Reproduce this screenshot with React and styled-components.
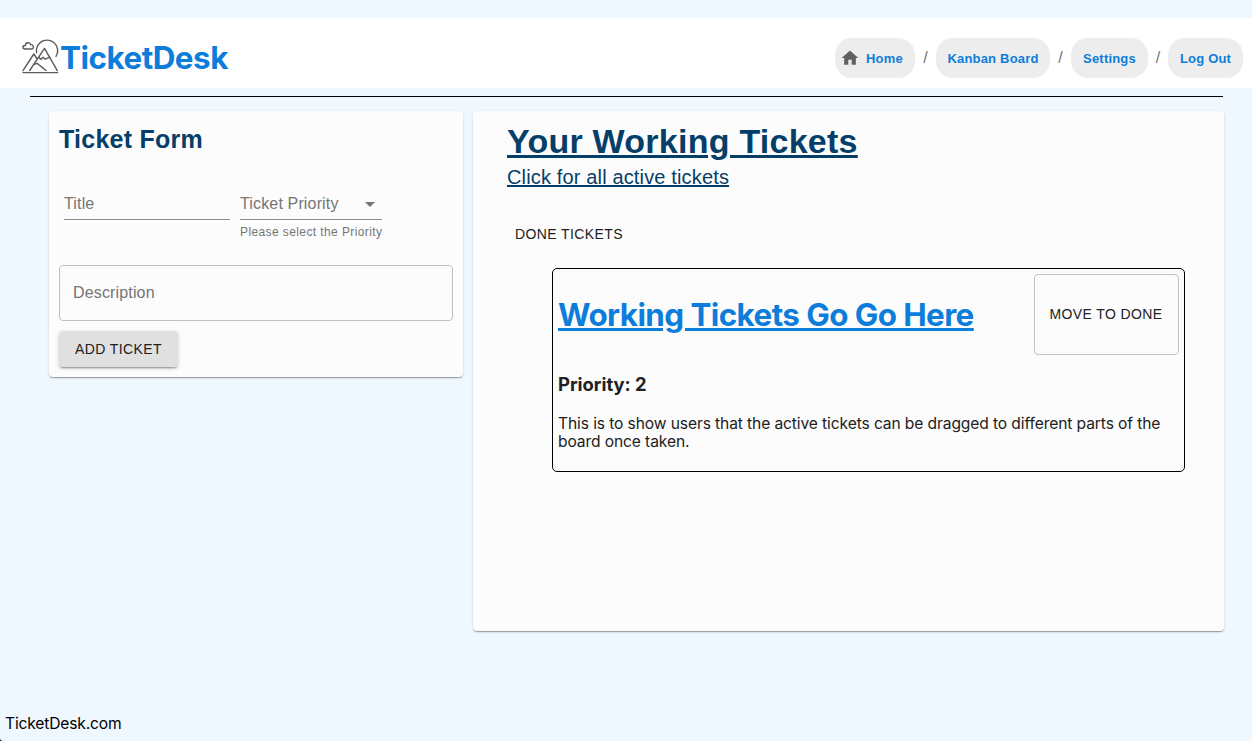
import React from "react";
import styled, { createGlobalStyle } from "styled-components";

const system = `Inter, "Liberation Sans", sans-serif`;
const helvetica = `"Liberation Sans", Arial, sans-serif`;

const GlobalStyle = createGlobalStyle`
  *, *::before, *::after { box-sizing: border-box; }
  body {
    margin: 0;
    background: #eff7ff;
    font-family: ${system};
    overflow: hidden;
  }
  h1, h2, h3, p { margin: 0; }
  button { font: inherit; }
`;

const Page = styled.div`
  display: flex;
  flex-direction: column;
  height: 100vh;
  padding-top: 18px;
`;

const Header = styled.header`
  display: flex;
  align-items: center;
  justify-content: space-between;
  height: 70px;
  padding: 0 9px 0 21px;
  background: #fff;
  flex: none;
`;

const Brand = styled.a`
  display: flex;
  align-items: center;
  height: 40px;
  color: #0d7ddb;
  text-decoration: none;
`;

const BrandName = styled.h1`
  font-size: 31.4px;
  line-height: 40px;
  font-weight: 700;
  letter-spacing: -0.5px;
  margin: 9px 0 0 -1px;
`;

const BrandLogo = styled.svg`
  width: 40px;
  height: 40px;
  margin-top: 7px;
`;

const Crumbs = styled.nav`
  display: flex;
  align-items: center;
  height: 40px;
  margin-top: 10px;
`;

const Crumb = styled.a`
  display: flex;
  align-items: center;
  justify-content: center;
  gap: 6px;
  width: ${(p) => p.$width}px;
  height: 40px;
  padding-top: 2px;
  padding-right: ${(p) => (p.$icon ? 7 : 0)}px;
  border-radius: 17px;
  background: #ededed;
  color: #0d7ddb;
  font: 700 13px/20px ${helvetica};
  letter-spacing: 0.2px;
  white-space: nowrap;
  svg { width: 20px; height: 20px; margin-top: -2px; fill: #616161; flex: none; }
`;

const Slash = styled.span`
  width: ${(p) => p.$width || 21}px;
  text-align: center;
  color: #757575;
  font: 16px/24px ${helvetica};
`;

const Divider = styled.hr`
  width: 1193px;
  height: 1px;
  margin: 8px 0 14px 30px;
  border: 0;
  background: #000;
  flex: none;
`;

const Main = styled.main`
  display: flex;
  align-items: flex-start;
  gap: 10px;
  padding: 0 28px 0 49px;
  flex: 1;
`;

const Card = styled.section`
  background: #fcfcfc;
  border-radius: 4px;
  box-shadow: 0 2px 1px -1px rgba(0, 0, 0, 0.2), 0 1px 1px 0 rgba(0, 0, 0, 0.14),
    0 1px 3px 0 rgba(0, 0, 0, 0.12);
`;

const FormCard = styled(Card)`
  width: 414px;
  height: 266px;
  padding: 10px;
`;

const FormTitle = styled.h2`
  color: #053e68;
  font: 700 25px/36px ${helvetica};
  letter-spacing: 0.25px;
`;

const FieldRow = styled.div`
  display: flex;
  gap: 10px;
  height: 92px;
  margin: 26px 5px 0;
`;

const Field = styled.div`
  width: ${(p) => p.$width}px;
  font-family: ${helvetica};
  color: #757575;
`;

const FieldLine = styled.div`
  display: flex;
  align-items: center;
  justify-content: space-between;
  height: 37px;
  padding-top: 5px;
  border-bottom: 1px solid #8c8c8c;
  font-size: 16px;
  letter-spacing: 0.15px;
  svg { width: 24px; height: 24px; fill: #757575; }
`;

const Helper = styled.p`
  padding-top: 2px;
  font-size: 12px;
  line-height: 20px;
  letter-spacing: 0.4px;
  white-space: nowrap;
`;

const Description = styled.div`
  display: flex;
  align-items: center;
  height: 56px;
  padding: 0 13px;
  margin-top: -10px;
  border: 1px solid #c1c1c1;
  border-radius: 4px;
  color: #757575;
  font: 16px/24px ${helvetica};
  letter-spacing: 0.15px;
`;

const Button = styled.button`
  display: flex;
  align-items: center;
  justify-content: center;
  padding: 0;
  border: 0;
  border-radius: 4px;
  background: transparent;
  color: #212121;
  font: 14px/24px ${helvetica};
  letter-spacing: 0.4px;
  text-transform: uppercase;
  white-space: nowrap;
`;

const AddButton = styled(Button)`
  width: 119px;
  height: 36px;
  margin-top: 10px;
  background: #e0e0e0;
  box-shadow: 0 3px 1px -2px rgba(0, 0, 0, 0.2), 0 2px 2px 0 rgba(0, 0, 0, 0.14),
    0 1px 5px 0 rgba(0, 0, 0, 0.12);
`;

const BoardCard = styled(Card)`
  flex: 1;
  height: 520px;
  padding: 9px 39px 0 34px;
`;

const BoardTitle = styled.h1`
  width: max-content;
  margin-bottom: 1px;
  color: #053e68;
  font: 700 34px/42px ${helvetica};
  letter-spacing: 0.25px;
  text-decoration: underline;
  text-decoration-thickness: 3px;
`;

const BoardLink = styled.a`
  display: block;
  width: max-content;
  color: #053e68;
  font: 20px/28px ${helvetica};
  letter-spacing: 0.15px;
  text-decoration: underline;
  text-decoration-thickness: 2px;
`;

const DoneButton = styled(Button)`
  width: 124px;
  height: 36px;
  margin-top: 25px;
`;

const Ticket = styled.article`
  height: 204px;
  margin: 16px 0 0 45px;
  padding: 5px;
  border: 1px solid #000;
  border-radius: 5px;
  color: #212121;
`;

const TicketHead = styled.div`
  display: flex;
  justify-content: space-between;
  align-items: center;
  height: 81px;
`;

const TicketTitle = styled.h1`
  color: #0d7ddb;
  font-size: 31.4px;
  line-height: 40px;
  font-weight: 700;
  letter-spacing: -0.58px;
  text-decoration: underline;
  text-decoration-thickness: 3px;
  white-space: nowrap;
`;

const MoveButton = styled(Button)`
  width: 145px;
  height: 81px;
  padding: 0 1px 2px 0;
  border: 1px solid #c1c1c1;
`;

const Priority = styled.h3`
  margin-top: 17px;
  font-size: 18.4px;
  line-height: 24px;
  font-weight: 700;
  letter-spacing: 0;
`;

const Body = styled.p`
  margin-top: 19px;
  font-size: 15.6px;
  line-height: 18px;
  letter-spacing: -0.11px;
  white-space: nowrap;
`;

const Footer = styled.footer`
  position: relative;
  height: 30px;
  padding: 1px 0 0 5px;
  font-size: 15.6px;
  line-height: 24px;
  color: #000;
  letter-spacing: -0.16px;
`;

const WindowCorner = styled.svg`
  position: absolute;
  left: 0;
  bottom: 0;
  width: 3px;
  height: 3px;
`;

const MountainLogo = () => (
  <BrandLogo viewBox="0 0 40 40" fill="none" stroke="#5c5c5c" strokeWidth="1.4" strokeLinecap="round" strokeLinejoin="round">
    <path d="M15.6 15.7A10.6 10.6 0 1 1 35 19.4" />
    <path d="M4.2 12C1 11.9 1.2 8.4 4.3 8.5C4.5 5.3 9.2 4.8 9.7 7.7C12.2 7.3 13.8 11.4 10.8 12Z" />
    <path d="M2 33.7L12.8 17L16.2 22M8.7 33.5L23.5 11.3L36.3 33.7" />
    <path d="M17.8 20.4L20.2 22.4L22 20.2L24.2 22.2L28.8 20.1M13.2 27.4L16.2 26.4L18.5 28.2L21.2 30.4L25 33.5" />
    <path d="M2 35.6H36.6" />
  </BrandLogo>
);

export default function App() {
  return (
    <>
      <GlobalStyle />
      <Page>
        <Header>
          <Brand>
            <MountainLogo />
            <BrandName>TicketDesk</BrandName>
          </Brand>
          <Crumbs>
            <Crumb $width={80} $icon>
              <svg viewBox="0 0 24 24"><path d="M10 20v-6h4v6h5v-8h3L12 3 2 12h3v8z" /></svg>
              Home
            </Crumb>
            <Slash>/</Slash>
            <Crumb $width={114}>Kanban Board</Crumb>
            <Slash>/</Slash>
            <Crumb $width={77}>Settings</Crumb>
            <Slash $width={20}>/</Slash>
            <Crumb $width={75}>Log Out</Crumb>
          </Crumbs>
        </Header>
        <Divider />
        <Main>
          <FormCard>
            <FormTitle>Ticket Form</FormTitle>
            <FieldRow>
              <Field $width={166}>
                <FieldLine>Title</FieldLine>
              </Field>
              <Field $width={142}>
                <FieldLine>
                  Ticket Priority
                  <svg viewBox="0 0 24 24"><path d="M7 10l5 5 5-5z" /></svg>
                </FieldLine>
                <Helper>Please select the Priority</Helper>
              </Field>
            </FieldRow>
            <Description>Description</Description>
            <AddButton>Add Ticket</AddButton>
          </FormCard>
          <BoardCard>
            <BoardTitle>Your Working Tickets</BoardTitle>
            <BoardLink>Click for all active tickets</BoardLink>
            <DoneButton>Done Tickets</DoneButton>
            <Ticket>
              <TicketHead>
                <TicketTitle>Working Tickets Go Go Here</TicketTitle>
                <MoveButton>Move to Done</MoveButton>
              </TicketHead>
              <Priority>Priority: 2</Priority>
              <Body>
                This is to show users that the active tickets can be dragged to different parts of the
                <br />
                board once taken.
              </Body>
            </Ticket>
          </BoardCard>
        </Main>
        <Footer>
          TicketDesk.com
          <WindowCorner viewBox="0 0 3 3"><path d="M0 0Q0 3 3 3H0Z" fill="#111" /></WindowCorner>
        </Footer>
      </Page>
    </>
  );
}
